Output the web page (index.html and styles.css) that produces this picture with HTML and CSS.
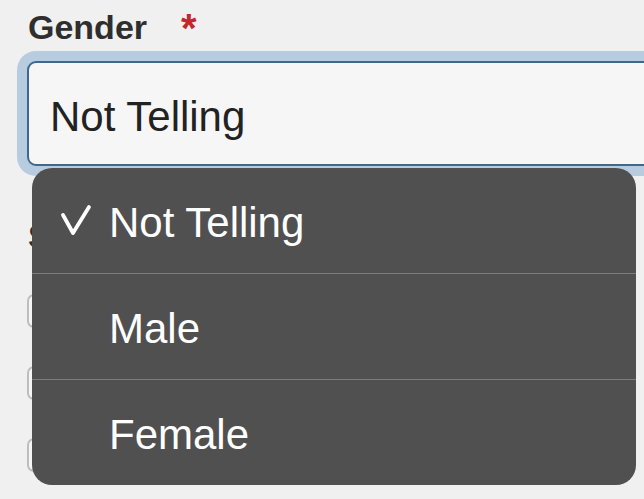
FILE: index.html
```html
<!DOCTYPE html>
<html lang="en">
<head>
  <meta charset="UTF-8">
  <title>Gender</title>
  <link rel="stylesheet" href="styles.css">
</head>
<body>

  <div class="form">
    <div class="field">
      <label class="label">Gender <span class="required">*</span></label>
      <div class="select">Not Telling</div>
    </div>

    <div class="field field-next">
      <label class="label">Sexuality</label>
      <div class="box"></div>
      <div class="box"></div>
      <div class="box"></div>
    </div>

    <ul class="menu">
      <li class="option">
        <span class="check">
          <svg width="32" height="34" viewBox="0 0 32 34">
            <path d="M3 12 L13 30 L29 4" fill="none" stroke="#fff" stroke-width="3.8" stroke-linecap="round" stroke-linejoin="round"/>
          </svg>
        </span>
        Not Telling
      </li>
      <li class="option"><span class="check"></span>Male</li>
      <li class="option"><span class="check"></span>Female</li>
    </ul>
  </div>

</body>
</html>
```

FILE: styles.css
```css
* {
  margin: 0;
  padding: 0;
  box-sizing: border-box;
  font-family: 'Liberation Sans', Arial, sans-serif;
}

body {
  background: #f0f0f0;
  width: 644px;
  height: 499px;
  overflow: hidden;
}

.form {
  position: relative;
  padding: 7px 0 0 28px;
}

.label {
  display: flex;
  align-items: flex-start;
  height: 40px;
  font-size: 34px;
  line-height: 40px;
  font-weight: bold;
  color: #2e2e2e;
}

.required {
  color: #c4262e;
  font-size: 40px;
  line-height: 40px;
  margin: 1px 0 0 34px;
}

.select {
  width: 700px;
  height: 105px;
  margin: 14px 0 0 -1px;
  padding: 31px 0 0 21px;
  background: #f6f6f6;
  border: 2px solid #3d6890;
  border-radius: 9px;
  box-shadow: 0 0 0 10px #b8cce0;
  font-size: 42px;
  line-height: 46px;
  color: #222;
}

.field-next {
  margin-top: 50px;
}

.box {
  width: 36px;
  height: 34px;
  margin: 38px 0 0 -1px;
  border: 2px solid #bdbdbd;
  border-radius: 7px;
  background: #f6f6f6;
}

.menu {
  position: absolute;
  left: 32px;
  top: 168px;
  width: 604px;
  list-style: none;
  background: #505050;
  border-radius: 20px;
  overflow: hidden;
}

.option {
  display: flex;
  height: 105px;
  padding: 32px 0 0 28px;
  font-size: 42px;
  line-height: 46px;
  color: #fff;
}

.option + .option {
  border-top: 1px solid #7c7c7c;
  height: 106px;
}

.check {
  width: 49px;
  flex-shrink: 0;
  padding-top: 3px;
}

.check svg {
  display: block;
}
```
